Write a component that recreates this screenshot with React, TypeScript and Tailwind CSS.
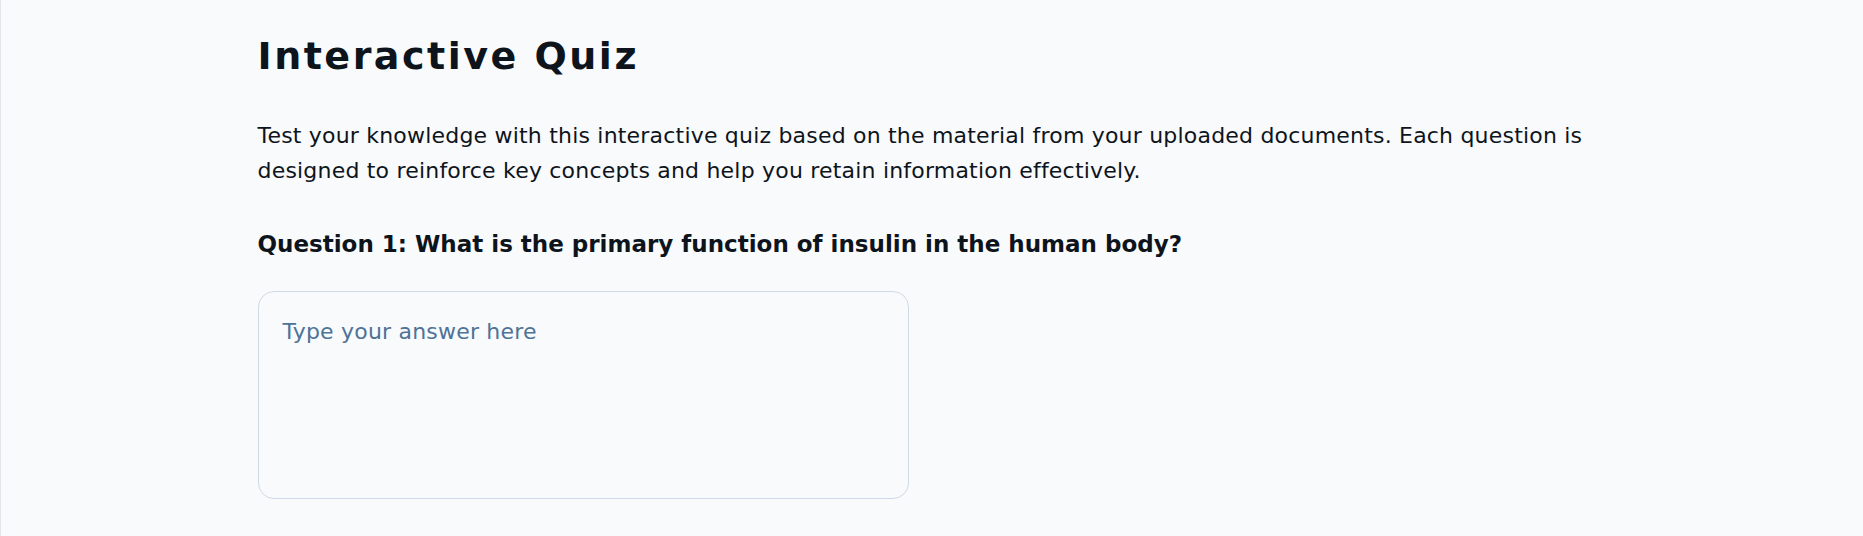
import React from "react";

export default function App() {
  return (
    <div
      className="min-h-screen w-full bg-slate-50 border-l border-[#e3e7ec] text-[#0e141b]"
      style={{ fontFamily: '"DejaVu Sans", "Noto Sans", sans-serif' }}
    >
      <main className="mx-auto max-w-[1349px] pt-[36px]">
        <h1 className="text-[38px] leading-[40px] font-bold tracking-[2.5px]">Interactive Quiz</h1>

        <p className="mt-[42px] text-[22px] leading-[35px] tracking-[0.2px]">
          Test your knowledge with this interactive quiz based on the material from your uploaded
          documents. Each question is designed to reinforce key concepts and help you retain
          information effectively.
        </p>

        <h3 className="mt-[40px] text-[23px] leading-[32px] font-bold">
          Question 1: What is the primary function of insulin in the human body?
        </h3>

        <div className="mt-[31px]">
          <textarea
            placeholder="Type your answer here"
            className="block w-[651px] h-[208px] resize-none rounded-2xl border border-[#cfdae6] bg-slate-50 px-6 pt-[26px] pb-6 text-[22px] leading-7 tracking-[0.2px] outline-none placeholder:text-[#4e7397]"
          />
        </div>
      </main>
    </div>
  );
}
